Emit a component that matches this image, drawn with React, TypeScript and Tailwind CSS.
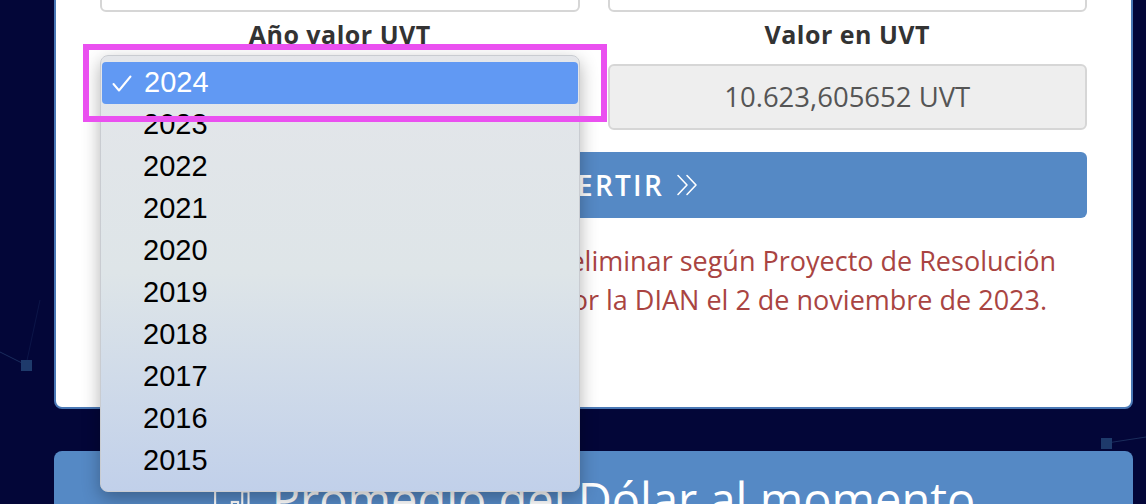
const years = ['2023', '2022', '2021', '2020', '2019', '2018', '2017', '2016', '2015'];

export default function App() {
  return (
    <div className="relative h-[504px] w-[1146px] overflow-hidden bg-[#030638] font-['Open_Sans',sans-serif]">
      <Network />

      <div className="relative -mt-[72px] pl-[54px] pr-[13px]">
        {/* Tarjeta del conversor */}
        <div className="rounded-[8px] border-2 border-[#4a78b5] bg-white px-[44px] pt-[16px] pb-[88px]">
          <div className="grid grid-cols-2 gap-x-[28px]">
            <div className="flex flex-col">
              <div className="h-[66px] rounded-[6px] border-2 border-[#d6d6d6] bg-white" />
              <label className="mt-[4px] h-[36px] text-center text-[25px] font-bold leading-[36px] tracking-[0.02em] text-[#333]">
                Año valor UVT
              </label>
              <div className="mt-[12px] flex h-[66px] items-center justify-center rounded-[6px] border-2 border-[#d6d6d6] bg-white text-[27px] text-[#555]">
                2024
              </div>
            </div>
            <div className="flex flex-col">
              <div className="h-[66px] rounded-[6px] border-2 border-[#d6d6d6] bg-white" />
              <label className="mt-[4px] h-[36px] text-center text-[25px] font-bold leading-[36px] tracking-[0.02em] text-[#333]">
                Valor en UVT
              </label>
              <div className="mt-[12px] flex h-[66px] items-center justify-center rounded-[6px] border-2 border-[#d6d6d6] bg-[#eeeeee] text-[27.5px] text-[#555]">
                10.623,605652 UVT
              </div>
            </div>
          </div>

          <button className="mt-[22px] flex h-[66px] w-full items-center justify-center gap-[12px] rounded-[6px] bg-[#5589c5] text-[28px] font-semibold tracking-[0.08em] text-white">
            CONVERTIR
            <svg width="22" height="22" viewBox="0 0 22 22" fill="none" stroke="white" strokeWidth="1.6" strokeLinecap="round" strokeLinejoin="round">
              <path d="M2 1.5 L11 11 L2 20.5" />
              <path d="M11 1.5 L20 11 L11 20.5" />
            </svg>
          </button>

          <p className="mt-[23px] pl-[6px] text-center text-[27px] leading-[39px] text-[#a94442]">
            Valor UVT 2024 sujeto a ratificar o eliminar según Proyecto de Resolución
            <br />
            publicado para sus comentarios por la DIAN el 2 de noviembre de 2023.
          </p>
        </div>

        {/* Siguiente tarjeta */}
        <div className="mt-[42px] flex h-[120px] items-start justify-center gap-[12px] rounded-t-[8px] bg-[#5589c5] pt-[20px] text-[47px] leading-[56px] text-white">
          <BarChartIcon />
          <span>Promedio del Dólar al momento</span>
        </div>
      </div>

      {/* Menú nativo del select abierto */}
      <div className="absolute left-[100px] top-[55px] h-[437px] w-[480px] rounded-[8px] border border-[#c9ccd1] bg-gradient-to-b from-[#e4e6ea] via-[#dee5e8] to-[#c1d0ea] pt-[6px] font-['Liberation_Sans',sans-serif] shadow-[0_6px_18px_rgba(0,0,0,0.3)]">
        <div className="mx-[1px] flex h-[42px] items-center rounded-[4px] bg-[#6199f3] pl-[10px] text-[29px] text-white">
          <span className="flex w-[32px] items-center">
            <svg width="20" height="17" viewBox="0 0 20 17" fill="none" stroke="white" strokeWidth="2" strokeLinecap="round" strokeLinejoin="round">
              <path d="M1.5 9 L7 15.5 L18.5 1.5" />
            </svg>
          </span>
          2024
        </div>
        {years.map((y) => (
          <div key={y} className="flex h-[42px] items-center pl-[42px] text-[29px] text-black">
            {y}
          </div>
        ))}
      </div>

      {/* Recuadro de resaltado */}
      <div className="absolute left-[83px] top-[44px] h-[78px] w-[524px] border-[6px] border-[#ea50f0]" />
    </div>
  );
}

function Network() {
  return (
    <svg className="absolute inset-0" width="1146" height="504" viewBox="0 0 1146 504">
      <line x1="0" y1="352" x2="26" y2="365" stroke="#1b2d5c" strokeWidth="1" />
      <line x1="40" y1="300" x2="26" y2="365" stroke="#0c1548" strokeWidth="1" />
      <rect x="21" y="360" width="11" height="11" fill="#1e3a6b" />
      <line x1="1107" y1="443" x2="1146" y2="437" stroke="#1b2d5c" strokeWidth="1" />
      <rect x="1101" y="438" width="11" height="11" fill="#1e3a6b" />
    </svg>
  );
}

function BarChartIcon() {
  return (
    <svg width="48" height="48" viewBox="0 0 46 46" className="mt-[8px]" fill="none" stroke="white" strokeWidth="2">
      <path d="M3 6 V43 H44" />
      <rect x="9" y="33" width="6" height="8" />
      <rect x="19" y="22" width="6" height="19" />
      <rect x="29" y="12" width="6" height="29" />
      <rect x="39" y="26" width="4" height="15" />
    </svg>
  );
}
